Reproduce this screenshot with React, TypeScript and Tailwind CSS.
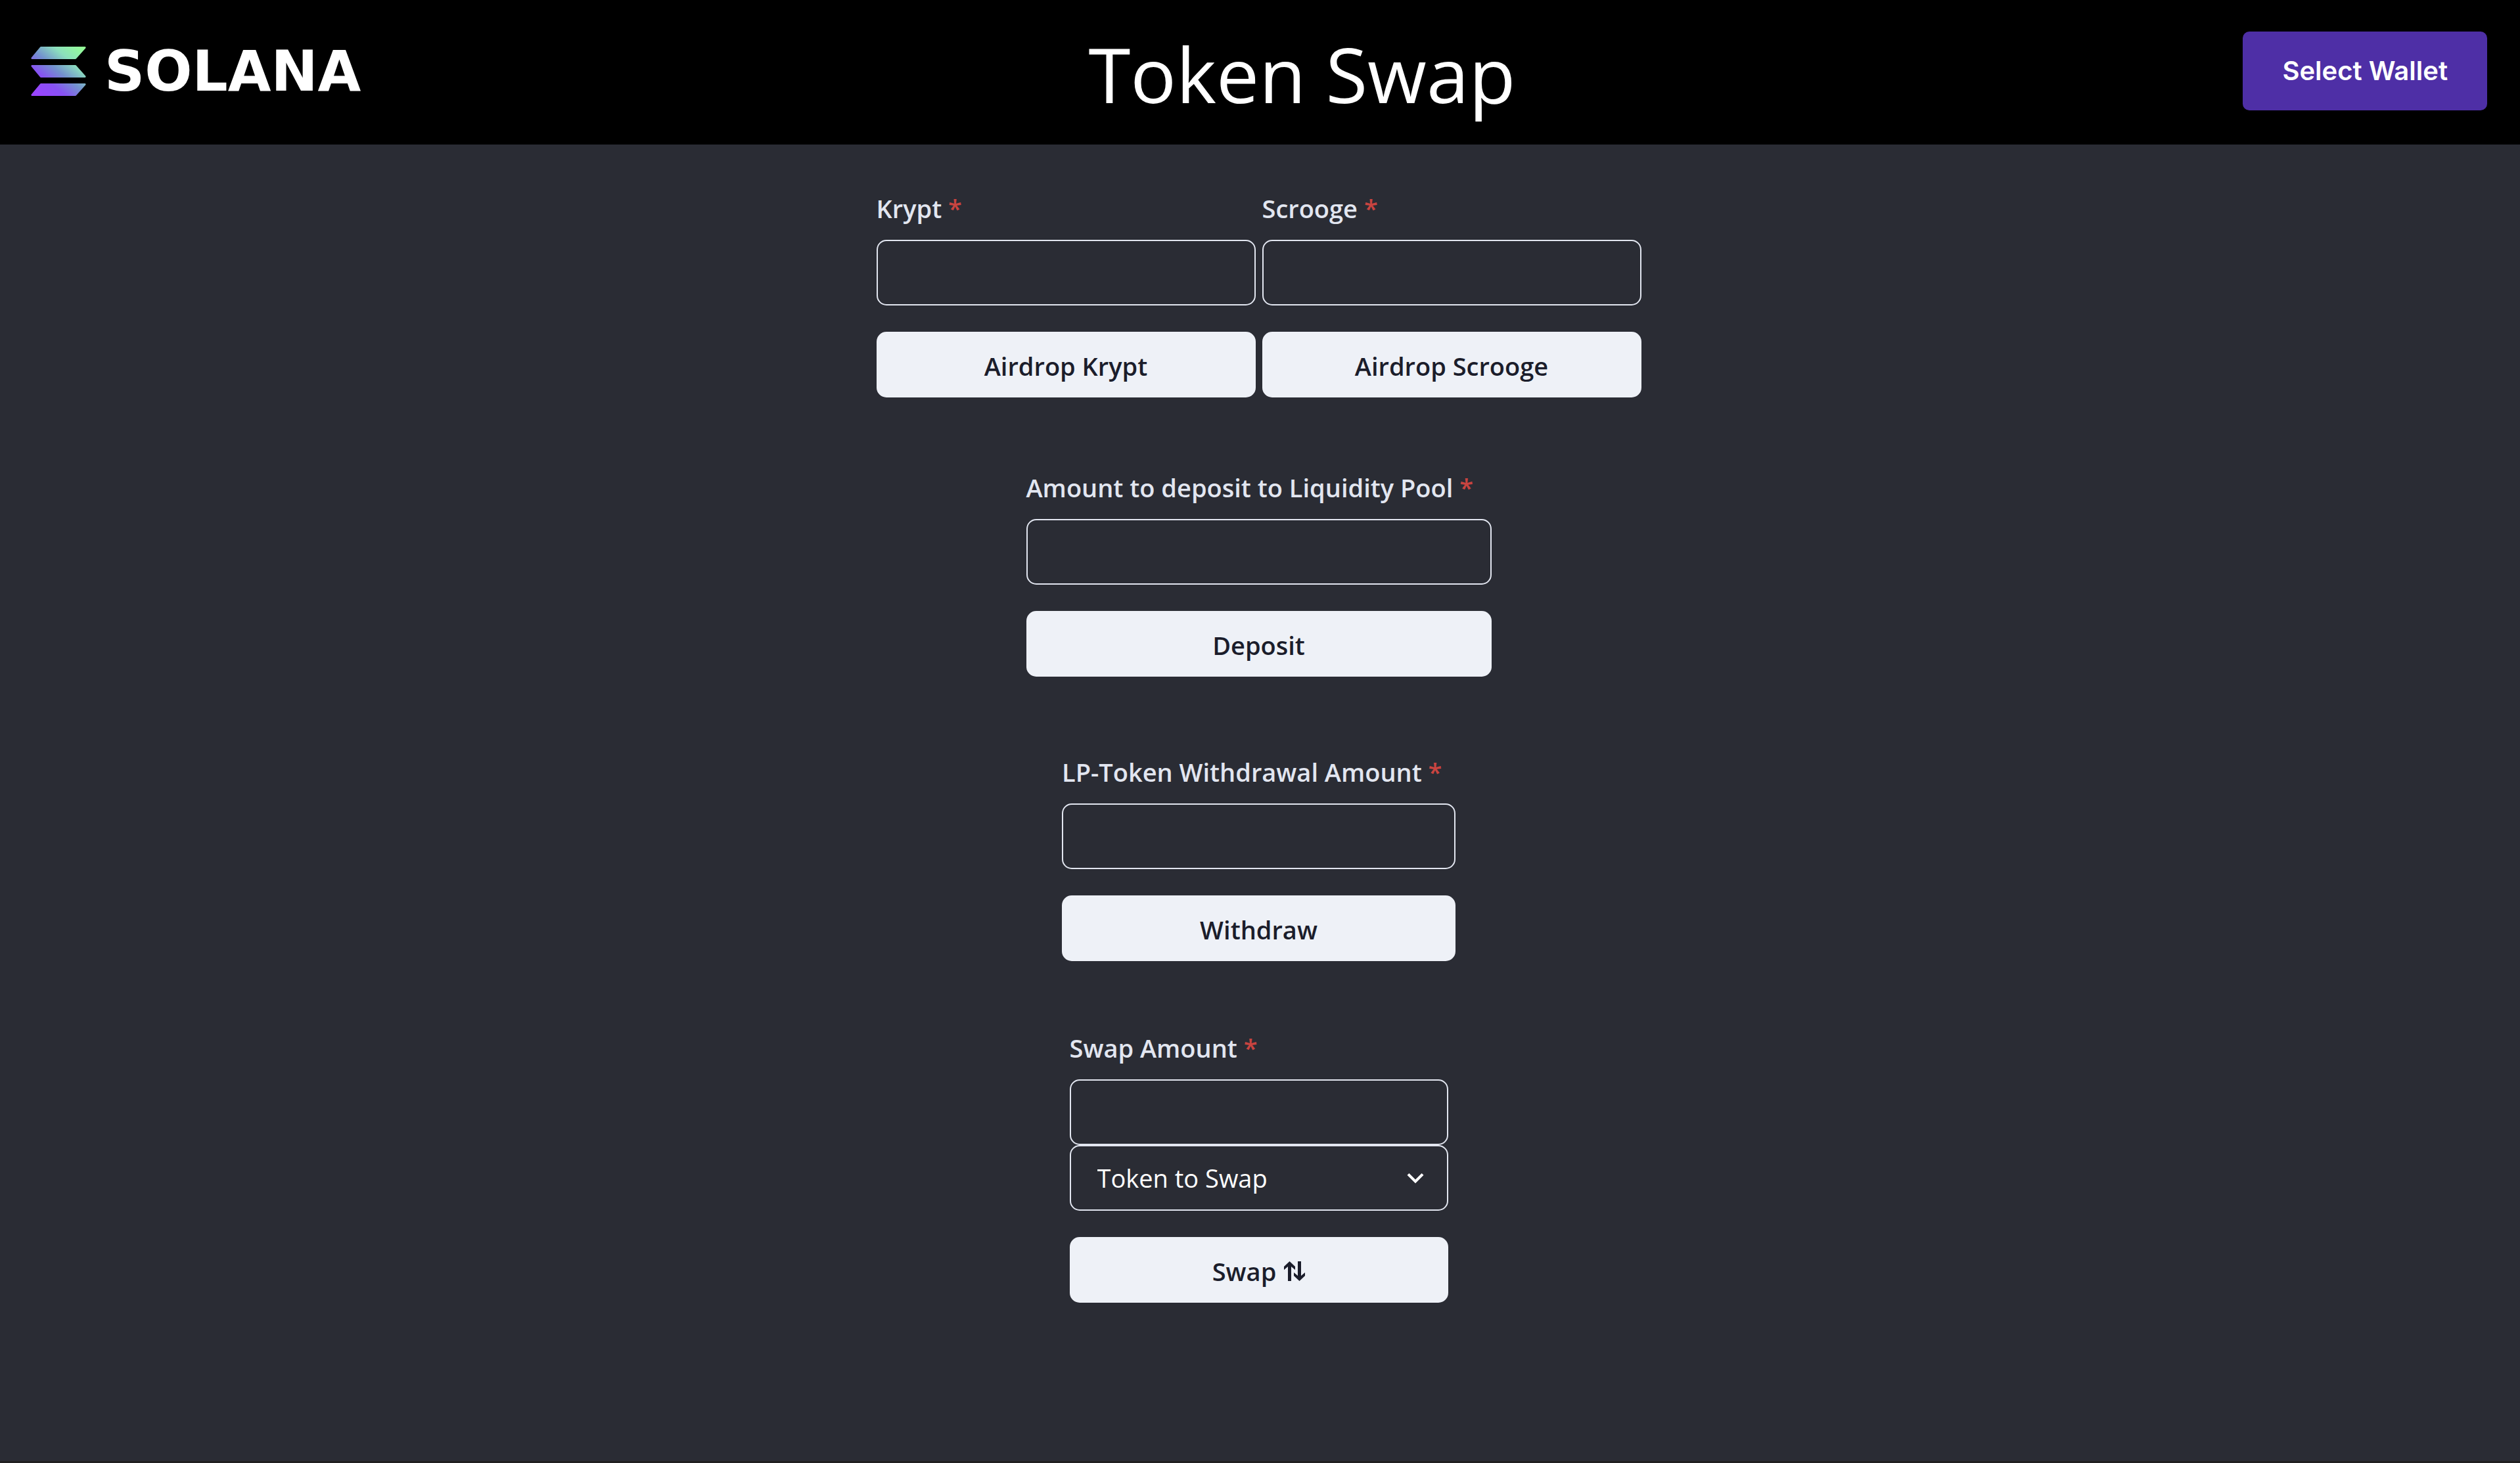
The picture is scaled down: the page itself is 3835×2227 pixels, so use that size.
import React, { useId } from "react";

function SolanaMark() {
  return (
    <svg viewBox="0 0 84 75" className="h-[75px] w-[84px]" aria-hidden="true">
      <defs>
        <linearGradient id="sol" gradientUnits="userSpaceOnUse" x1="8" y1="80" x2="78" y2="-4">
          <stop offset="0.08" stopColor="#9945ff" />
          <stop offset="0.3" stopColor="#8752f3" />
          <stop offset="0.5" stopColor="#7391cf" />
          <stop offset="0.72" stopColor="#8ce0bd" />
          <stop offset="0.97" stopColor="#95fd97" />
        </linearGradient>
      </defs>
      <g fill="url(#sol)">
        <path d="M15 0H82.500Q84 .4 83.500 2L69 18.200Q68.500 19 67.500 19H1.500Q0 18.600 .5 17L14 .8Z" />
        <path d="M15 47H82.500Q84 46.600 83.500 45L69 28.800Q68.500 28 67.500 28H1.500Q0 28.400 .5 30L14 46.200Z" />
        <path d="M15 56H82.500Q84 56.400 83.500 58L69 74.200Q68.500 75 67.500 75H1.500Q0 74.600 .5 73L14 56.800Z" />
      </g>
    </svg>
  );
}

const boxClass =
  "h-[100px] w-full rounded-[15px] border-2 border-[#e2e6f0] bg-transparent px-10 text-[38px] text-white outline-none";

function Field({ label }: { label: string }) {
  const id = useId();
  return (
    <div className="flex flex-col">
      <label htmlFor={id} className="mb-4 text-[38px] leading-[64px] font-semibold whitespace-nowrap text-[#e2e6f0]">
        {label} <span className="text-[#c94440]">*</span>
      </label>
      <input id={id} type="text" required className={boxClass} />
    </div>
  );
}

function ActionButton({ children }: { children: React.ReactNode }) {
  return (
    <button
      type="submit"
      className="mt-10 flex h-[100px] w-full items-center justify-center gap-3 rounded-[15px] bg-[#eef1f7] pt-1 text-[38px] font-semibold text-[#1b1d2b]"
    >
      {children}
    </button>
  );
}

function Form({ className, children }: { className: string; children: React.ReactNode }) {
  return (
    <form className={className} onSubmit={(e) => e.preventDefault()}>
      {children}
    </form>
  );
}

export default function App() {
  return (
    <div className="flex min-h-screen flex-col border-b-3 border-[#202020] bg-[#2a2c34] font-['Open_Sans',sans-serif]">
      <header className="flex h-[220px] items-center justify-between bg-black pr-[50px] pb-1 pl-[47px]">
        <a href="#" className="flex items-center gap-7 text-white">
          <SolanaMark />
          <span className="font-['DejaVu_Sans',sans-serif] text-[85px] leading-none font-bold">SOLANA</span>
        </a>
        <h1 className="pt-2 text-[116px] leading-none text-white">Token Swap</h1>
        <button
          type="button"
          className="h-[120px] rounded-[10px] bg-[#4e2fa6] px-15 font-['Inter',sans-serif] text-[40px] font-semibold text-white"
        >
          Select Wallet
        </button>
      </header>

      <main className="flex flex-col items-center pt-[65px] pr-1">
        <div className="flex gap-[10px]">
          <Form className="w-[577px]">
            <Field label="Krypt" />
            <ActionButton>Airdrop Krypt</ActionButton>
          </Form>
          <Form className="w-[577px]">
            <Field label="Scrooge" />
            <ActionButton>Airdrop Scrooge</ActionButton>
          </Form>
        </div>
        <Form className="mt-[105px] w-[708px]">
          <Field label="Amount to deposit to Liquidity Pool" />
          <ActionButton>Deposit</ActionButton>
        </Form>
        <Form className="mt-[113px] w-[599px]">
          <Field label="LP-Token Withdrawal Amount" />
          <ActionButton>Withdraw</ActionButton>
        </Form>
        <Form className="mt-[100px] w-[576px]">
          <Field label="Swap Amount" />
          <div className="relative">
            <select aria-label="Token to Swap" className={`${boxClass} block appearance-none`}>
              <option>Token to Swap</option>
              <option>Krypt</option>
              <option>Scrooge</option>
            </select>
            <svg
              viewBox="0 0 24 24"
              className="pointer-events-none absolute top-[25px] right-[25px] size-[50px] fill-white"
              aria-hidden="true"
            >
              <path d="M16.59 8.59L12 13.17 7.41 8.59 6 10l6 6 6-6z" />
            </svg>
          </div>
          <ActionButton>
            Swap
            <svg viewBox="0 0 32 30" className="h-[30px] w-8" fill="currentColor" aria-hidden="true">
              <path d="M0 13V8L8.500 0L17 8V13L11 8V30H6V8Z" />
              <path d="M15 17V22L23.500 30L32 22V17L26 22V0H21V22Z" />
            </svg>
          </ActionButton>
        </Form>
      </main>
    </div>
  );
}
